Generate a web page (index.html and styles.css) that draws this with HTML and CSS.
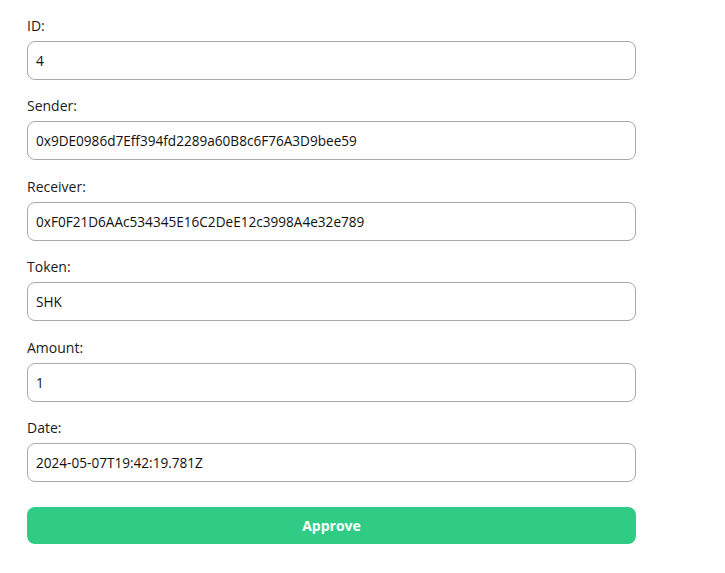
FILE: index.html
```html
<!DOCTYPE html>
<html lang="en">
<head>
<meta charset="utf-8">
<title>Transaction</title>
<link rel="stylesheet" href="styles.css">
</head>
<body>
<form class="form">
  <div class="field">
    <label class="label" for="f-id">ID:</label>
    <input class="input" id="f-id" type="text" value="4" readonly>
  </div>
  <div class="field">
    <label class="label" for="f-sender">Sender:</label>
    <input class="input" id="f-sender" type="text" value="0x9DE0986d7Eff394fd2289a60B8c6F76A3D9bee59" readonly>
  </div>
  <div class="field">
    <label class="label" for="f-receiver">Receiver:</label>
    <input class="input" id="f-receiver" type="text" value="0xF0F21D6AAc534345E16C2DeE12c3998A4e32e789" readonly>
  </div>
  <div class="field">
    <label class="label" for="f-token">Token:</label>
    <input class="input" id="f-token" type="text" value="SHK" readonly>
  </div>
  <div class="field">
    <label class="label" for="f-amount">Amount:</label>
    <input class="input" id="f-amount" type="text" value="1" readonly>
  </div>
  <div class="field">
    <label class="label" for="f-date">Date:</label>
    <input class="input" id="f-date" type="text" value="2024-05-07T19:42:19.781Z" readonly>
  </div>
  <button class="button" type="button">Approve</button>
</form>
</body>
</html>
```

FILE: styles.css
```css
html, body {
  margin: 0;
  padding: 0;
  background: #ffffff;
}

body {
  font-family: "Open Sans", "Noto Sans", sans-serif;
  font-size: 14px;
  font-weight: 500;
  color: #1a1a1a;
}

.form {
  display: flex;
  flex-direction: column;
  width: 609px;
  padding: 16px 0 0 27px;
}

.field {
  display: flex;
  flex-direction: column;
  margin-bottom: 16.4px;
}

.label {
  display: block;
  line-height: 20px;
  height: 20px;
  margin-bottom: 5px;
  color: #1a1a1a;
}

.input {
  box-sizing: border-box;
  width: 609px;
  height: 39px;
  margin: 0;
  padding: 0 8px;
  border: 1px solid #a9a9a9;
  border-radius: 8px;
  font-family: inherit;
  font-size: 13.6px;
  font-weight: 500;
  color: #111111;
  background: #ffffff;
  outline: none;
}

.button {
  box-sizing: border-box;
  width: 609px;
  height: 37px;
  margin-top: 8.6px;
  border: none;
  border-radius: 8px;
  background: #30cc86;
  color: #ffffff;
  font-family: inherit;
  font-size: 14px;
  font-weight: 700;
  cursor: pointer;
}
```
